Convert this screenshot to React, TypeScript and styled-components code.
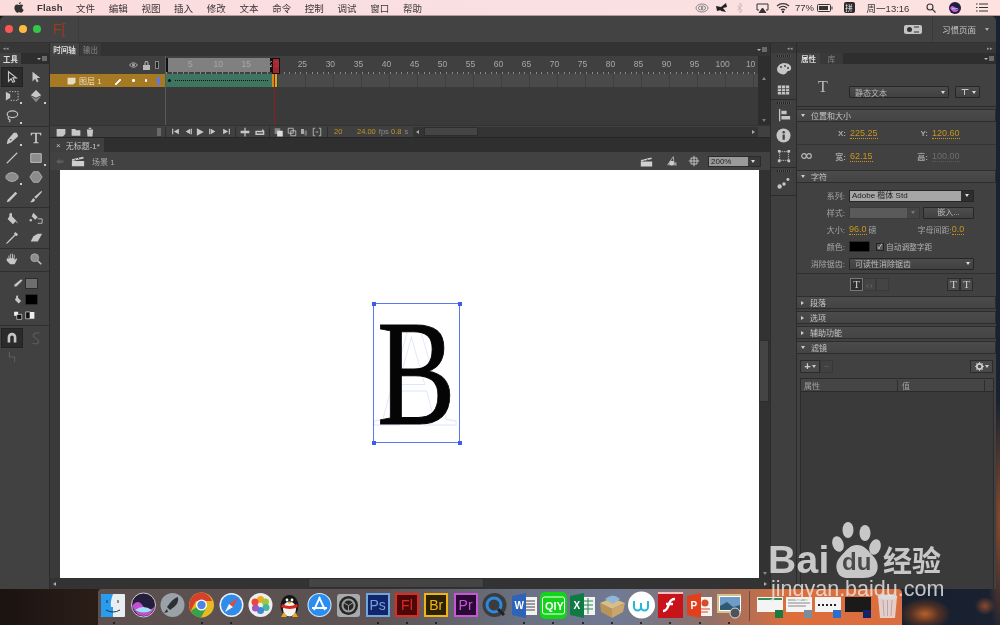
import React from "react";
import styled, { createGlobalStyle } from "styled-components";

const Global = createGlobalStyle`
  html, body { margin: 0; padding: 0; width: 1000px; height: 625px; overflow: hidden; background: #1a1210; }
  * { box-sizing: border-box; }
  #root { width: 1000px; height: 625px; }
`;

const FONT = `"Liberation Sans", "Noto Sans CJK SC", sans-serif`;
const ORANGE = "#c8961e";

const Screen = styled.div`
  position: relative; width: 1000px; height: 625px; overflow: hidden; display: flex; flex-direction: column;
  font-family: ${FONT}; filter: blur(0.35px);
  background:
    radial-gradient(ellipse 26px 16px at 925px 614px, #b5602c 0%, rgba(120,60,30,.6) 55%, transparent 100%),
    radial-gradient(ellipse 10px 9px at 985px 606px, #8a4a2a 0%, transparent 100%),
    radial-gradient(ellipse 14px 120px at 1000px 520px, #8a4a2a 0%, transparent 100%),
    linear-gradient(90deg, #1b1311 0%, #2a1d18 9%, #18202e 92%, #1a2232 100%);
`;

/* ---------- mac menu bar ---------- */
const MenuBar = styled.div`
  height: 16px; flex: none; display: flex; align-items: center; padding-left: 14px;
  background: linear-gradient(90deg, #fbdcdc 0%, #f9dfe3 45%, #fce3df 100%);
  border-bottom: 1px solid #b99b9b; color: #3a3436; font-size: 9.5px;
`;
const AppleSlot = styled.span` width: 23px; display: flex; `;
const AppName = styled.span` font-weight: 700; width: 39px; font-size: 9.5px; letter-spacing: .2px; `;
const MenuItem = styled.span` width: 32.7px; white-space: nowrap; `;
const StatusArea = styled.div` margin-left: auto; display: flex; align-items: center; height: 100%; padding-right: 7px; `;
const StatusCell = styled.span<{ $w: number }>`
  width: ${p => p.$w}px; display: flex; justify-content: center; align-items: center; white-space: nowrap; font-size: 9.5px;
`;
const PinBadge = styled.span`
  width: 11px; height: 11px; border-radius: 2px; background: #2e2a2c; color: #eee; font-size: 7.5px; display: flex; align-items: center; justify-content: center;
`;

/* ---------- app window ---------- */
const AppWindow = styled.div`
  width: 996px; height: 573px; flex: none; display: flex; flex-direction: column; background: #2b2b2b;
  border-radius: 5px 5px 0 0; overflow: hidden;
`;
const TitleBar = styled.div`
  height: 27px; flex: none; background: #434343; display: flex; align-items: center; padding-left: 5px; border-bottom: 1px solid #333;
`;
const Light = styled.span<{ $c: string }>`
  width: 8px; height: 8px; border-radius: 50%; background: ${p => p.$c}; margin-right: 6px;
`;
const FlLogo = styled.span`
  color: #9c3a22; font-size: 14px; margin-left: 6px; width: 26px; letter-spacing: 0; font-weight: 400;
  align-self: stretch; display: flex; align-items: center; border-right: 1px solid #3d3d3d;
`;
const TitleRight = styled.div` margin-left: auto; display: flex; align-items: center; height: 100%; `;
const GearChip = styled.span`
  width: 18px; height: 9px; border-radius: 2px; background: #c4c4c4; display: flex; align-items: center; justify-content: center; margin-right: 10px;
`;
const Workspace = styled.span`
  height: 100%; width: 64px; border-left: 1px solid #3a3a3a; padding-left: 9px; color: #c4c4c4; font-size: 8.5px;
  display: flex; align-items: center; gap: 9px;
`;
const Columns = styled.div` flex: 1; min-height: 0; display: flex; `;

/* ---------- tools ---------- */
const ToolsPanel = styled.div`
  width: 50px; flex: none; background: #414141; display: flex; flex-direction: column; border-right: 1px solid #2c2c2c;
`;
const CollapseBar = styled.div<{ $end?: boolean }>`
  height: 10px; flex: none; background: #373737; color: #999; font-size: 5px; display: flex; align-items: center;
  justify-content: ${p => (p.$end ? "flex-end" : "flex-start")}; padding: 0 3px;
`;
const ToolTabRow = styled.div`
  height: 11px; flex: none; background: #2e2e2e; display: flex; align-items: stretch; justify-content: space-between; padding-right: 2px;
`;
const ActiveTab = styled.span<{ $w: number }>`
  width: ${p => p.$w}px; background: #414141; color: #ddd; font-size: 7.5px; display: flex; align-items: center; justify-content: center; font-weight: 700;
`;
const PanelMenu = styled.span`
  display: flex; align-items: center; gap: 1px; color: #aaa;
  &::before { content: ""; border: 2px solid transparent; border-top-color: #bbb; margin-top: 2px; }
  &::after { content: ""; width: 5px; height: 5px; background: #6a6a6a; }
`;
const ToolGroup = styled.div<{ $t: number; $b?: number }>`
  display: grid; grid-template-columns: 24px 24px; padding: ${p => p.$t}px 0 ${p => p.$b ?? 0}px 0; grid-auto-rows: 19.5px; border-bottom: 1px solid #2f2f2f;
  &:last-child { border-bottom: none; }
`;
const ToolCell = styled.div<{ $on?: boolean; $more?: boolean }>`
  position: relative; display: flex; align-items: center; justify-content: center; margin: 0 1px;
  ${p => p.$on && "background:#2b2b2b; border:1px solid #222;"}
  ${p => p.$more && `&::after { content:""; position:absolute; right:1px; bottom:2px; width:2px; height:2px; background:#ccc; }`}
`;
const SwatchRow = styled.div` display: flex; align-items: center; height: 16px; padding-left: 13px; gap: 2px; `;
const Swatch = styled.span<{ $c: string }>` width: 13px; height: 11px; background: ${p => p.$c}; border: 1px solid #2c2c2c; `;
const ColorGroup = styled.div` padding: 3px 0 2px; border-bottom: 1px solid #2f2f2f; `;

/* ---------- centre ---------- */
const Centre = styled.div` flex: 1; min-width: 0; display: flex; flex-direction: column; `;
const TimelinePanel = styled.div` height: 94px; flex: none; display: flex; flex-direction: column; background: #3a3a3a; `;
const TabStrip = styled.div`
  height: 13px; flex: none; background: #333; display: flex; align-items: stretch; justify-content: space-between; padding-right: 3px;
`;
const TabGroup = styled.div` display: flex; `;
const PanelTab = styled.span<{ $on?: boolean; $w: number }>`
  width: ${p => p.$w}px; font-size: 7.5px; display: flex; align-items: center; justify-content: center; margin-right: 1px;
  background: ${p => (p.$on ? "#434343" : "#393939")}; color: ${p => (p.$on ? "#d8d8d8" : "#888")}; font-weight: ${p => (p.$on ? 700 : 400)};
`;
const TimelineBody = styled.div` flex: 1; min-height: 0; display: flex; position: relative; `;
const LayerColumn = styled.div` width: 116px; flex: none; display: flex; flex-direction: column; border-right: 1px solid #5a5a5a; `;
const FrameColumn = styled.div` width: 592px; flex: none; display: flex; flex-direction: column; position: relative; overflow: hidden; `;
const VScroll = styled.div`
  flex: 1; background: #2e2e2e; display: flex; flex-direction: column; justify-content: space-between; align-items: center; padding: 21px 0 3px; color: #777; font-size: 5px;
`;
const LayerHead = styled.div`
  height: 18px; flex: none; background: #404040; display: flex; align-items: center; justify-content: flex-end; gap: 5px; padding-right: 6px;
`;
const LayerRow = styled.div`
  height: 13px; flex: none; background: #a67a22; display: flex; align-items: center; padding-left: 17px; color: #e6dcc0; font-size: 8px;
`;
const LayerName = styled.span` margin-left: 3px; width: 35px; `;
const LayerDot = styled.span` width: 2.5px; height: 2.5px; border-radius: 50%; background: #fff; margin-left: 10px; `;
const LayerTag = styled.span` width: 3px; height: 8px; background: #5a78e8; margin-left: 10px; `;
const LayerEmpty = styled.div` flex: 1; background: #3a3a3a; `;
const Ruler = styled.div`
  height: 18px; flex: none; position: relative; display: flex; padding: 2px 0 0 10.3px; color: #a8a8a8; font-size: 8.5px; background: #404040;
  &::after {
    content: ""; position: absolute; left: 0; right: 0; bottom: 0; height: 2px; z-index: 2;
    background: repeating-linear-gradient(90deg, #8a8a8a 0 1px, transparent 1px 5.6px);
  }
`;
const RulerNum = styled.span` flex: 0 0 28.03px; text-align: center; line-height: 12px; position: relative; z-index: 2; `;
const PlayRange = styled.div`
  position: absolute; left: 0; top: 2px; width: 106px; height: 14px; background: #808080;
  border-left: 2px solid #111; border-right: 2px solid #111; z-index: 1;
`;
const FrameRow = styled.div`
  height: 13px; flex: none; display: flex; background: repeating-linear-gradient(90deg, #4a4a4a 0 27px, #3f3f3f 27px 28px);
`;
const Tween = styled.div`
  width: 106px; flex: none; background: #3d7560; position: relative; display: flex; align-items: center; padding: 0 3px 0 2px;
  &::after { content: ""; flex: 1; margin-left: 4px; height: 1px; background: repeating-linear-gradient(90deg, #111 0 1px, transparent 1px 2px); }
`;
const KeyDot = styled.span` width: 3px; height: 3px; background: #111; border-radius: 50%; `;
const EndKey = styled.div` width: 5px; flex: none; background: linear-gradient(90deg, #d58a1c 0 2px, #8a2a1c 2px 3px, #c9b11e 3px); `;
const FrameEmpty = styled.div` flex: 1; background: #3a3a3a; `;
const PlayHead = styled.div`
  position: absolute; left: 108px; top: 2px; bottom: 0; width: 1px; background: #8e1f1a; z-index: 3;
  &::before { content: ""; position: absolute; left: -2.5px; top: 0; width: 6px; height: 14px; background: rgba(190,30,40,.75); border: 1px solid #111; border-top-color: #111; }
`;
const TimelineFoot = styled.div`
  height: 12px; flex: none; background: #404040; display: flex; align-items: center; color: #999; font-size: 8px; border-top: 1px solid #333; padding-left: 4px;
`;
const FootSlot = styled.span<{ $w: number }>` width: ${p => p.$w}px; flex: none; display: flex; justify-content: center; align-items: center; `;
const FootGrip = styled.span` width: 4px; height: 8px; background: #6a6a6a; `;
const FootValue = styled.span<{ $w: number }>` width: ${p => p.$w}px; flex: none; color: ${ORANGE}; font-size: 7.5px; white-space: nowrap; `;
const FootDim = styled.span` color: #8a8a8a; margin-left: 1px; `;
const Divider = styled.span<{ $m: number }>` width: 1px; height: 10px; background: #2e2e2e; margin: 0 ${p => p.$m}px; flex: none; `;
const HTrack = styled.div`
  flex: 1; height: 10px; background: #343434; display: flex; align-items: center; padding: 0 3px; color: #999; font-size: 5px; gap: 5px; margin-right: 12px;
`;
const HThumb = styled.span<{ $w: number }>` width: ${p => p.$w}px; height: 9px; background: #454545; border: 1px solid #2d2d2d; `;
const Tri = styled.span<{ $dir: "l" | "r" | "u" | "d"; $c?: string; $auto?: boolean }>`
  width: 0; height: 0; flex: none; border: 2.5px solid transparent;
  ${p => p.$auto && "margin-left:auto;"}
  ${p => p.$dir === "l" && `border-right: 3px solid ${p.$c || "#aaa"}; border-left-width:0;`}
  ${p => p.$dir === "r" && `border-left: 3px solid ${p.$c || "#aaa"}; border-right-width:0;`}
  ${p => p.$dir === "u" && `border-bottom: 3px solid ${p.$c || "#888"}; border-top-width:0;`}
  ${p => p.$dir === "d" && `border-top: 3px solid ${p.$c || "#aaa"}; border-bottom-width:0;`}
`;
const DocTabs = styled.div` height: 15px; flex: none; background: #2f2f2f; display: flex; border-top: 1px solid #262626; `;
const DocTab = styled.div`
  width: 54px; background: #3f3f3f; color: #c4c4c4; font-size: 8px; display: flex; align-items: center; padding-left: 6px; gap: 5px; white-space: nowrap;
`;
const SceneBar = styled.div`
  height: 18px; flex: none; background: #424242; display: flex; align-items: center; padding-left: 5px; color: #aaa; font-size: 8px; padding-right: 9px;
`;
const SceneName = styled.span``;
const SceneRight = styled.div` margin-left: auto; display: flex; align-items: center; `;
const ZoomBox = styled.div`
  width: 53px; height: 11px; border: 1px solid #2b2b2b; background: #3a3a3a; display: flex; align-items: center; margin-left: 5px; padding-right: 3px;
`;
const ZoomField = styled.span` width: 39px; height: 100%; background: #9a9a9a; color: #222; font-size: 8px; padding-left: 2px; line-height: 9px; margin-right: 3px; `;
const StageRow = styled.div` flex: 1; min-height: 0; display: flex; background: #3a3a3a; padding-left: 10px; `;
const Stage = styled.div` flex: 1; position: relative; background: #fff; overflow: hidden; `;
const GhostA = styled.span`
  position: absolute; left: 313px; top: 130px; font-family: "Liberation Serif", serif; font-size: 149px; line-height: 149px; color: transparent;
  -webkit-text-stroke: 1px #dfe6fb; transform: scaleX(.78); transform-origin: left center;
`;
const GlyphB = styled.span`
  position: absolute; left: 316.5px; top: 128px; font-family: "Liberation Serif", serif; font-size: 151px; line-height: 151px; color: #050505;
  -webkit-text-stroke: 1px #050505; transform: scaleX(.78); transform-origin: left center;
`;
const SelectBox = styled.div` position: absolute; left: 313px; top: 133px; width: 87px; height: 140px; border: 1px solid #5a78f0; `;
const Handle = styled.span<{ $x: "l" | "r"; $y: "t" | "b" }>`
  position: absolute; width: 4px; height: 4px; background: #3a5cf5;
  ${p => (p.$x === "l" ? "left:-2.5px;" : "right:-2.5px;")}
  ${p => (p.$y === "t" ? "top:-2.5px;" : "bottom:-2.5px;")}
`;
const StageV = styled.div`
  width: 11px; flex: none; background: #323232; display: flex; flex-direction: column; align-items: center; justify-content: flex-end; padding-bottom: 3px; position: relative;
`;
const StageVThumb = styled.span` position: absolute; left: 0; right: 1px; top: 170px; height: 62px; background: #444; border: 1px solid #2c2c2c; `;
const StageH = styled.div`
  height: 11px; flex: none; background: #333; display: flex; align-items: center; padding: 0 3px 0 3px; position: relative;
`;
const StageHThumb = styled.span` position: absolute; left: 258px; width: 176px; top: 0; height: 10px; background: #444; border: 1px solid #2e2e2e; `;

/* ---------- icon dock strip ---------- */
const Strip = styled.div` width: 27px; flex: none; display: flex; flex-direction: column; background: #3f3f3f; border-left: 1px solid #2b2b2b; border-right: 1px solid #2b2b2b; `;
const StripGroup = styled.div<{ $h: number }>`
  height: ${p => p.$h}px; flex: none; display: flex; flex-direction: column; align-items: center; gap: 6px; padding-top: 2px; border-bottom: 1px solid #2b2b2b;
`;
const Grip = styled.span`
  width: 14px; height: 2px; flex: none; background: repeating-linear-gradient(90deg, #222 0 1px, #555 1px 2px); margin-bottom: -2px;
`;

/* ---------- properties ---------- */
const Props = styled.div` width: 199px; flex: none; display: flex; flex-direction: column; background: #414141; `;
const PropsTop = styled.div`
  height: 43px; flex: none; display: flex; align-items: center; padding: 14px 0 0 52px; position: relative; border-bottom: 1px solid #2b2b2b;
`;
const TGlyph = styled.span` position: absolute; left: 21px; top: 13px; font-family: "Liberation Serif", serif; color: #bbb; font-size: 16px; line-height: 20px; `;
const Combo = styled.div<{ $w: number }>`
  width: ${p => p.$w}px; height: 12px; background: linear-gradient(#4c4c4c, #404040); border: 1px solid #262626; border-radius: 1px; display: flex; align-items: center;
  color: #b8b8b8; font-size: 8px; padding: 0 3px 0 5px; white-space: nowrap;
`;
const ComboGap = styled.span` width: 6px; `;
const Section = styled.div`
  height: 13px; flex: none; background: linear-gradient(#4b4b4b, #444); border-top: 1px solid #2d2d2d; border-bottom: 1px solid #2d2d2d; border-right: 1px solid #2d2d2d;
  display: flex; align-items: center; padding-left: 4px; color: #c4c4c4; font-size: 8px; gap: 6px; margin-top: 2px;
`;
const PosRow = styled.div<{ $line?: boolean }>`
  height: 23px; flex: none; display: grid; grid-template-columns: 53px 52px 30px auto; align-items: center; font-size: 9px; color: #aaa; position: relative;
  ${p => p.$line && "border-bottom: 1px solid #343434;"}
`;
const PosLabel = styled.span` text-align: right; padding-right: 4px; font-weight: 700; font-size: 8px; color: #a8a8a8; `;
const NumLink = styled.span<{ $dim?: boolean }>`
  justify-self: start; color: ${p => (p.$dim ? "#6f6f6f" : ORANGE)}; font-size: 9px; border-bottom: 1px dotted ${p => (p.$dim ? "#5a5a5a" : ORANGE)}; line-height: 10px; white-space: nowrap;
`;
const ChainSlot = styled.span` position: absolute; left: 4px; top: 8px; display: flex; `;
const CharBody = styled.div` flex: none; display: flex; flex-direction: column; padding-top: 4px; `;
const FormRow = styled.div` height: 17px; display: flex; align-items: center; font-size: 8px; color: #a6a6a6; `;
const FormLabel = styled.span` width: 52px; text-align: right; padding-right: 4px; flex: none; white-space: nowrap; `;
const FontField = styled.div`
  width: 125px; height: 12px; background: #2e2e2e; border: 1px solid #262626; display: flex; align-items: center; color: #222; font-size: 8px;
`;
const FontValue = styled.span` width: 111px; height: 100%; background: #a6a6a6; padding-left: 2px; line-height: 10px; margin-right: 4px; white-space: nowrap; `;
const StyleField = styled.span`
  width: 71px; height: 12px; background: linear-gradient(90deg, #5a5a5a 0 82%, #454545 82%); border: 1px solid #3a3a3a; display: flex; align-items: center; padding-right: 4px;
`;
const EmbedBtn = styled.span`
  width: 51px; height: 12px; margin-left: 3px; background: linear-gradient(#4e4e4e, #414141); border: 1px solid #262626; border-radius: 1px; color: #bbb; font-size: 8px; text-align: center; line-height: 10px;
`;
const Spread = styled.span` margin-left: 41px; color: #a6a6a6; white-space: nowrap; `;
const InlineVal = styled.span` color: ${ORANGE}; border-bottom: 1px dotted ${ORANGE}; font-size: 9px; line-height: 10px; `;
const Unit = styled.span` margin-left: 2px; color: #aaa; `;
const ColorChip = styled.span` width: 21px; height: 11px; background: #000; border: 1px solid #2a2a2a; flex: none; `;
const CheckBox = styled.span`
  width: 8px; height: 8px; margin-left: 6px; border: 1px solid #222; background: #555; color: #ddd; font-size: 7px; line-height: 6px; text-align: center; margin-right: 2px;
`;
const ChipLabel = styled.span` color: #b4b4b4; font-size: 7.7px; white-space: nowrap; `;
const BtnRow = styled.div`
  height: 21px; flex: none; margin-top: 1px; border-top: 1px solid #2f2f2f; display: flex; align-items: center; padding-left: 53px;
`;
const StyleBtn = styled.span<{ $on?: boolean; $dim?: boolean }>`
  width: 13px; height: 13px; font-family: "Liberation Serif", serif; font-size: 11px; line-height: 11px; text-align: center; flex: none;
  background: ${p => (p.$on ? "#2f2f2f" : "#4b4b4b")}; border: 1px solid #2c2c2c; color: ${p => (p.$dim ? "#666" : "#ccc")};
  ${p => p.$dim && "background:#444; border-color:#3a3a3a;"}
  ${p => p.$on && "border-color:#777;"}
`;
const BtnGap = styled.span` width: 58px; `;
const FilterBar = styled.div` height: 24px; flex: none; display: flex; align-items: center; padding: 0 3px 0 3px; `;
const PlusBtn = styled.span`
  width: 20px; height: 13px; border: 1px solid #2b2b2b; background: #4a4a4a; display: flex; align-items: center; justify-content: center; gap: 1px; color: #ccc; font-size: 11px; font-weight: 700; line-height: 10px;
`;
const MinusBtn = styled.span`
  width: 13px; height: 13px; border: 1px solid #383838; color: #666; font-size: 9px; display: flex; align-items: center; justify-content: center;
`;
const GearBtn = styled.span`
  margin-left: auto; width: 23px; height: 13px; border: 1px solid #2b2b2b; background: #4a4a4a; display: flex; align-items: center; justify-content: center; gap: 1px; margin-right: 0;
`;
const FilterTable = styled.div` flex: 1; margin: 0 2px 0 3px; background: #3a3a3a; border: 1px solid #2b2b2b; border-bottom: none; `;
const FilterHead = styled.div`
  height: 13px; display: flex; align-items: center; color: #a0a0a0; font-size: 8px; border-bottom: 1px solid #2b2b2b; background: #454545; padding-left: 3px;
`;
const FilterCol = styled.span<{ $w: number }>` width: ${p => p.$w}px; `;
const FilterCol2 = styled(FilterCol)` border-left: 1px solid #2d2d2d; border-right: 1px solid #2d2d2d; padding-left: 4px; `;

/* ---------- mac dock ---------- */
const Dock = styled.div`
  height: 36px; flex: none; width: 804px; margin-left: 98px; display: flex; padding-left: 1.35px; border-radius: 4px 4px 0 0;
  background: linear-gradient(90deg, #5c4f4e 0%, #5d5354 35%, #6a7080 52%, #707a92 65%, #8f7068 76%, #dd6e3c 86%, #d96e40 100%);
`;
const DockCell = styled.div<{ $on?: boolean }>`
  flex: 0 0 29.3px; height: 100%; display: flex; justify-content: center; padding-top: 2px; position: relative;
  ${p => p.$on && `&::after { content:""; position:absolute; left:13.5px; bottom:1px; width:2px; height:2px; border-radius:50%; background:#111; }`}
`;
const DockSep = styled.div` flex: 0 0 11.7px; display: flex; justify-content: center; padding: 2px 0 4px; &::after { content:""; width:1px; background: rgba(60,40,40,.55); } `;
const AppTile = styled.span<{ $bg: string; $fg: string }>`
  width: 24px; height: 24px; margin-top: 2px; background: ${p => p.$bg}; border: 2px solid ${p => p.$fg}; color: ${p => p.$fg};
  font-size: 14px; display: flex; align-items: center; justify-content: center; line-height: 1;
`;

/* ---------- watermark ---------- */
const Watermark = styled.div` position: absolute; left: 0; top: 0; width: 1000px; height: 625px; pointer-events: none; color: rgba(235,235,235,.8); `;
const WmBai = styled.span` position: absolute; left: 768px; top: 541px; font-size: 39px; line-height: 38px; font-weight: 700; letter-spacing: .3px; `;
const WmCn = styled.span` position: absolute; left: 883px; top: 543px; font-size: 29px; line-height: 32px; font-weight: 700; font-family: "Noto Sans CJK SC", sans-serif; `;
const WmUrl = styled.span` position: absolute; left: 771px; top: 577px; font-size: 21.5px; line-height: 24px; `;
const WmDu = styled.span` position: absolute; left: 842px; top: 550px; font-size: 24px; line-height: 24px; font-weight: 700; color: #4a4a4a; `;
const WmPaw = styled.svg` position: absolute; left: 830px; top: 518px; `;

/* ---------- drawings ---------- */
const I = ({ s = 14, c = "#c6c6c6", d, sw, children }: { s?: number; c?: string; d?: string; sw?: boolean; children?: React.ReactNode }) => (
  <svg width={s} height={s} viewBox="0 0 16 16" fill={sw ? "none" : c} stroke={sw ? c : undefined} strokeWidth={sw ? 1.3 : undefined}>
    {d && <path d={d} />}
    {children}
  </svg>
);

const tools = {
  arrowO: <I sw d="M4 2v11l3-3 2 4 2-1-2-4h4z" />,
  arrowF: <I d="M4 2v11l3-3 2 4 2-1-2-4h4z" />,
  free: <I><path d="M1 3l5 3v4l-5 3z" /><path fill="none" stroke="#c6c6c6" strokeDasharray="1.5 1.5" d="M5 3h10v10H5" /></I>,
  d3: <I><path d="M8 1l6 6-6 3-6-3z" /><path d="M2 8l6 3 6-3-6 7z" fill="#8a8a8a" /></I>,
  lasso: <I sw><ellipse cx="8.5" cy="6" rx="6" ry="3.8" /><path d="M4 9c-1 2 0 3 1 3s1 2-.5 3" /></I>,
  pen: <I d="M13 2l1 1 1 3-8 7-5 2 1-5 7-8zM6 9a1 1 0 1 0 1.6.8" />,
  text: <I><path d="M2 2h12v3h-1l-1-2H9v9.500l2 .5v1H5v-1l2-.5V3H4L3 5H2z" /></I>,
  line: <I sw d="M2 14L14 2" />,
  rect: <I><path d="M2 3h12v10H2z" fill="#8c8c8c" stroke="#c6c6c6" /></I>,
  oval: <I><ellipse cx="8" cy="8" rx="7" ry="5" fill="#8c8c8c" stroke="#b6b6b6" /></I>,
  poly: <I><path d="M5 2h6l4 6-4 6H5L1 8z" fill="#8c8c8c" stroke="#b6b6b6" /></I>,
  pencil: <I d="M12 2l2 2-9 9-3 1 1-3z" />,
  brush: <I d="M14 1l1 1-7 8-2-2zM5 9l2 2c-1 3-3 3-6 3 2-1 2-3 4-5z" />,
  bucket: <I d="M7 2l1 1v3l5 5-4 4-6-6 2-3V3zM13 11c1 1 2 3 1 3s-1-2-1-3z" />,
  ink: <I><path d="M5 2l5 5-3 3-4-4zM2 9a1.500 1.500 0 1 0 .1 0" /><path fill="none" stroke="#c6c6c6" d="M10 9h5v5h-5" /></I>,
  drop: <I d="M12 1l3 3-2 2-1-1-6 6-3 3-2 1 1-2 3-3 6-6-1-1z" />,
  eraser: <I d="M10 3h5l-5 9H2l3-6z" />,
  hand: <I d="M4 8V4h1v3h1V2h1v5h1V2h1v5h1V3h1v6l2-2 1 1-3 6H6L2 10V7h1z" />,
  zoom: <I><circle cx="6.500" cy="6.500" r="4.500" fill="#8e8e8e" stroke="#aaa" /><path d="M10 10l4 4" stroke="#bbb" strokeWidth="2" /></I>,
  swap: <I><path d="M1 2h8v8H1z" fill="#eee" stroke="#111" /><path d="M6 7h8v8H6z" fill="#111" stroke="#eee" /></I>,
  noColor: <I><path d="M1 3h7v11H1z" fill="#111" stroke="#eee" /><path d="M8 3h7v11H8z" fill="#eee" /></I>,
  magnet: <I><path d="M3 13V7a5 5 0 0 1 10 0v6h-3V7a2 2 0 0 0-4 0v6z" /></I>,
  smooth: <I c="#5e5e5e" sw d="M12 2C6 2 4 4 5 6s6 3 6 6-3 3-7 2" />,
  straight: <I c="#5e5e5e" sw d="M5 2v6h6v6" />,
};

const Tool = ({ icon, on, more }: { icon: React.ReactNode; on?: boolean; more?: boolean }) => (
  <ToolCell $on={on} $more={more}>{icon}</ToolCell>
);

const foot = {
  newLayer: <I s={10} d="M1 3h14v8l-4 4H1z" />,
  folder: <I s={10} d="M1 3h6l1 2h7v9H1z" />,
  trash: <I s={10} d="M3 4h10l-1 11H4zM6 1h4v2H6z" />,
  first: <I s={9} d="M2 3h2v10H2zM14 3v10L5 8z" />,
  prev: <I s={9} d="M11 3v10L3 8zM12 3h2v10h-2z" />,
  play: <I s={10} d="M3 2v12l11-6z" />,
  next: <I s={9} d="M5 3v10l8-5zM2 3h2v10H2z" />,
  last: <I s={9} d="M2 3v10l9-5zM12 3h2v10h-2z" />,
  center: <I s={10} d="M7 1h2v5h6v4H9v5H7v-5H1V6h6z" />,
  loop: <I s={11} d="M2 7h10V4l3 3v6H2zM4 9v2h9V9z" />,
  onion: <I s={10}><path d="M1 2h9v9H1z" fill="#888" /><path d="M5 6h9v9H5z" fill="#ddd" /></I>,
  onion2: <I s={10} sw><path d="M2 2h8v8H2zM6 6h8v8H6z" /></I>,
  edit: <I s={10}><path d="M2 2h6v10H2z" fill="#aaa" /><path d="M9 5h5v10H9z" fill="#777" /></I>,
  mark: <I s={10} sw><path d="M5 2H2v12h3M11 2h3v12h-3M6 8h4" /></I>,
};

const Clapper = ({ c = "#cfcfcf", s = 14 }: { c?: string; s?: number }) => (
  <I s={s} c={c}><path d="M1 8h14v6H1z" /><path d="M1 6l13-3 .5 2L1.500 8z" /><path d="M4 5.500l1.500 1.500M8 4.500l1.500 1.500" stroke="#424242" /></I>
);

const WifiIcon = () => (
  <svg width="14" height="11" viewBox="0 0 14 11" fill="none" stroke="#3a3436" strokeWidth="1.200"><path d="M1 4a9 9 0 0 1 12 0M3 6a6 6 0 0 1 8 0M5 8a3 3 0 0 1 4 0" /><circle cx="7" cy="9.800" r=".6" fill="#3a3436" /></svg>
);

const Dk = ({ children, on }: { children: React.ReactNode; on?: boolean }) => <DockCell $on={on}>{children}</DockCell>;
const S = ({ children }: { children: React.ReactNode }) => <svg width="29" height="29" viewBox="0 0 29 29">{children}</svg>;

const thumb = (badge: string, kind: number) => (
  <S>
    <rect x="1" y="6" width="26" height="15" fill={kind === 3 ? "#1a1a1a" : "#f4f4f4"} />
    {kind === 0 && <rect x="2" y="7" width="24" height="2" fill="#2f8f5a" />}
    {kind === 1 && <path d="M3 9h20M3 12h22M3 15h18" stroke="#888" />}
    {kind === 2 && <path d="M4 14h18" stroke="#222" strokeWidth="2" strokeDasharray="2 2" />}
    <rect x="19" y="19" width="8" height="8" fill={badge} />
  </S>
);

export default function App() {
  const menus = ["文件", "编辑", "视图", "插入", "修改", "文本", "命令", "控制", "调试", "窗口", "帮助"];
  const labels = Array.from({ length: 20 }, (_, i) => String((i + 1) * 5));
  return (
    <Screen>
      <Global />
      <MenuBar>
        <AppleSlot>
          <svg width="10" height="11" viewBox="0 0 16 18" fill="#333"><path d="M11 0c.2 2-1.500 3.800-3.300 3.700C7.500 2 9.200.2 11 0zM8 5c1 0 2-1 3.700-1 1.300 0 2.600.7 3.300 1.900-3 1.700-2.500 5.800.6 7-.8 2-2.400 4.600-4 4.600-1.200 0-1.600-.8-3.100-.8s-2 .8-3.100.8C3.300 17.500.5 13.300.5 9.400.5 6 2.700 4 4.700 4 6 4 7.200 5 8 5z" /></svg>
        </AppleSlot>
        <AppName>Flash</AppName>
        {menus.map(m => <MenuItem key={m}>{m}</MenuItem>)}
        <StatusArea>
          <StatusCell $w={24}><svg width="14" height="10" viewBox="0 0 14 10" fill="none" stroke="#888"><ellipse cx="7" cy="5" rx="6" ry="4" /><circle cx="5.500" cy="5" r="2" /><circle cx="8.500" cy="5" r="2" /></svg></StatusCell>
          <StatusCell $w={14}><svg width="12" height="11" viewBox="0 0 12 11" fill="#222"><path d="M6 5L11 1l1 4-4 1 3 4-5-1zM6 5L1 4l1 5 4-1z" /></svg></StatusCell>
          <StatusCell $w={24}><svg width="6" height="10" viewBox="0 0 6 10" fill="none" stroke="#cbb9bb"><path d="M0 2.500l5 5L3 10V0l2 2.500-5 5" /></svg></StatusCell>
          <StatusCell $w={20}><svg width="13" height="10" viewBox="0 0 13 10" fill="none" stroke="#333"><path d="M3 7H1V1h11v6h-2" /><path d="M6.500 5L10 10H3z" fill="#333" /></svg></StatusCell>
          <StatusCell $w={22}><WifiIcon /></StatusCell>
          <StatusCell $w={21}>77%</StatusCell>
          <StatusCell $w={20}><svg width="16" height="8" viewBox="0 0 16 8"><rect x=".5" y=".5" width="13" height="7" rx="1" fill="none" stroke="#333" /><rect x="2" y="2" width="9" height="4" fill="#333" /><rect x="14.500" y="2.500" width="1" height="3" fill="#333" /></svg></StatusCell>
          <StatusCell $w={28}><PinBadge>拼</PinBadge></StatusCell>
          <StatusCell $w={50}>周一13:16</StatusCell>
          <StatusCell $w={36}><svg width="10" height="10" viewBox="0 0 10 10" fill="none" stroke="#333" strokeWidth="1.100"><circle cx="4" cy="4" r="3" /><path d="M6.200 6.200L9.500 9.500" /></svg></StatusCell>
          <StatusCell $w={12}><svg width="12" height="12" viewBox="0 0 12 12"><circle cx="6" cy="6" r="6" fill="#221c3e" /><path d="M1 6q2.500-4 5 0t5 0q-2 4-5 4T1 6z" fill="#cf5fd0" /><path d="M3 7q3-2 6 0" stroke="#7fd6ff" fill="none" /></svg></StatusCell>
          <StatusCell $w={10} />
          <StatusCell $w={22}><svg width="12" height="9" viewBox="0 0 12 9" stroke="#333"><path d="M3 1h9M3 4.500h9M3 8h9" /><path d="M0 1h1.500M0 4.500h1.500M0 8h1.500" /></svg></StatusCell>
        </StatusArea>
      </MenuBar>

      <AppWindow>
        <TitleBar>
          <Light $c="#fc5753" /><Light $c="#fdbc40" /><Light $c="#33c748" />
          <FlLogo>F[</FlLogo>
          <TitleRight>
            <GearChip><svg width="14" height="7" viewBox="0 0 14 7" fill="#333"><circle cx="3.500" cy="3.500" r="2.500" /><path d="M8 1h5M8 6h5" stroke="#333" /></svg></GearChip>
            <Workspace>习惯页面<Tri $dir="d" /></Workspace>
          </TitleRight>
        </TitleBar>
        <Columns>
          <ToolsPanel>
            <CollapseBar>◂◂</CollapseBar>
            <ToolTabRow><ActiveTab $w={21}>工具</ActiveTab><PanelMenu /></ToolTabRow>
            <ToolGroup $t={3}>
              <Tool icon={tools.arrowO} on /><Tool icon={tools.arrowF} />
              <Tool icon={tools.free} more /><Tool icon={tools.d3} more />
              <Tool icon={tools.lasso} more />
            </ToolGroup>
            <ToolGroup $t={2}>
              <Tool icon={tools.pen} more /><Tool icon={tools.text} />
              <Tool icon={tools.line} /><Tool icon={tools.rect} more />
              <Tool icon={tools.oval} more /><Tool icon={tools.poly} />
              <Tool icon={tools.pencil} /><Tool icon={tools.brush} />
            </ToolGroup>
            <ToolGroup $t={1}>
              <Tool icon={tools.bucket} /><Tool icon={tools.ink} />
              <Tool icon={tools.drop} /><Tool icon={tools.eraser} />
            </ToolGroup>
            <ToolGroup $t={1} $b={2}>
              <Tool icon={tools.hand} /><Tool icon={tools.zoom} />
            </ToolGroup>
            <ColorGroup>
              <SwatchRow><I s={10} d="M13 2l2 2-9 9-4 1 1-4z" /><Swatch $c="#6e6e6e" /></SwatchRow>
              <SwatchRow><I s={10} d="M7 2l1 1v3l5 5-4 4-6-6 2-3V3z" /><Swatch $c="#000" /></SwatchRow>
              <SwatchRow><I s={10}>{tools.swap.props.children}</I><I s={10}>{tools.noColor.props.children}</I></SwatchRow>
            </ColorGroup>
            <ToolGroup $t={2}>
              <Tool icon={tools.magnet} on /><Tool icon={tools.smooth} />
              <Tool icon={tools.straight} />
            </ToolGroup>
          </ToolsPanel>

          <Centre>
            <TimelinePanel>
              <TabStrip>
                <TabGroup><PanelTab $on $w={29}>时间轴</PanelTab><PanelTab $w={21}>输出</PanelTab></TabGroup>
                <PanelMenu />
              </TabStrip>
              <TimelineBody>
                <LayerColumn>
                  <LayerHead>
                    <svg width="9" height="6" viewBox="0 0 9 6" fill="none" stroke="#aaa"><path d="M.5 3Q4.500-1.500 8.500 3 4.500 7.500.5 3z" /><circle cx="4.500" cy="3" r="1" fill="#aaa" /></svg>
                    <svg width="7" height="9" viewBox="0 0 7 9" fill="#b8b8b8"><path d="M0 4h7v5H0zM1.500 4V2a2 2 0 0 1 4 0v2h-1V2a1 1 0 0 0-2 0v2z" /></svg>
                    <svg width="4" height="8" viewBox="0 0 4 8"><rect x=".5" y=".5" width="3" height="7" fill="#222" stroke="#888" /></svg>
                  </LayerHead>
                  <LayerRow>
                    <I s={9} c="#e8dcc0" d="M1 3h14v8l-4 4H1z" />
                    <LayerName>图层 1</LayerName>
                    <svg width="8" height="8" viewBox="0 0 8 8" stroke="#eee"><path d="M1 7l5-5 1 1-5 5z" fill="#eee" /></svg>
                    <LayerDot /><LayerDot /><LayerTag />
                  </LayerRow>
                  <LayerEmpty />
                </LayerColumn>
                <FrameColumn>
                  <Ruler>
                    <PlayRange />
                    {labels.map(l => <RulerNum key={l}>{l}</RulerNum>)}
                    <RulerNum>10</RulerNum>
                  </Ruler>
                  <FrameRow><Tween><KeyDot /></Tween><EndKey /></FrameRow>
                  <FrameEmpty />
                  <PlayHead />
                </FrameColumn>
                <VScroll><Tri $dir="u" /><Tri $dir="d" $c="#777" /></VScroll>
              </TimelineBody>
              <TimelineFoot>
                <FootSlot $w={14}>{foot.newLayer}</FootSlot>
                <FootSlot $w={16}>{foot.folder}</FootSlot>
                <FootSlot $w={12}>{foot.trash}</FootSlot>
                <FootSlot $w={59} />
                <FootSlot $w={8}><FootGrip /></FootSlot>
                <Divider $m={2} />
                <FootSlot $w={14}>{foot.first}</FootSlot>
                <FootSlot $w={12}>{foot.prev}</FootSlot>
                <FootSlot $w={12}>{foot.play}</FootSlot>
                <FootSlot $w={12}>{foot.next}</FootSlot>
                <FootSlot $w={16}>{foot.last}</FootSlot>
                <Divider $m={1} />
                <FootSlot $w={16}>{foot.center}</FootSlot>
                <FootSlot $w={12}>{foot.loop}</FootSlot>
                <Divider $m={4} />
                <FootSlot $w={10}>{foot.onion}</FootSlot>
                <FootSlot $w={16}>{foot.onion2}</FootSlot>
                <FootSlot $w={8}>{foot.edit}</FootSlot>
                <FootSlot $w={18}>{foot.mark}</FootSlot>
                <Divider $m={1} />
                <FootSlot $w={5} />
                <FootValue $w={23}>20</FootValue>
                <FootValue $w={34}>24.00<FootDim> fps</FootDim></FootValue>
                <FootValue $w={22}>0.8<FootDim> s</FootDim></FootValue>
                <HTrack><Tri $dir="l" /><HThumb $w={54} /><Tri $dir="r" $auto /></HTrack>
              </TimelineFoot>
            </TimelinePanel>

            <DocTabs>
              <DocTab><span>×</span><span>无标题-1*</span></DocTab>
            </DocTabs>
            <SceneBar>
              <I s={9} c="#5e5e5e" d="M8 3v3h7v4H8v3L2 8z" />
              <FootSlot $w={28}><Clapper /></FootSlot>
              <SceneName>场景 1</SceneName>
              <SceneRight>
                <FootSlot $w={26}><Clapper s={13} /></FootSlot>
                <FootSlot $w={26}><I s={13}><path d="M9 2L2 12h8z" fill="none" stroke="#bbb" /><circle cx="7" cy="10" r="3" fill="#ccc" /><rect x="10" y="9" width="3" height="4" fill="#999" /></I></FootSlot>
                <FootSlot $w={18}><I s={12} sw d="M8 1v14M1 8h14M4 4h8v8H4z" /></FootSlot>
                <ZoomBox><ZoomField>200%</ZoomField><Tri $dir="d" $c="#ddd" /></ZoomBox>
              </SceneRight>
            </SceneBar>
            <StageRow>
              <Stage>
                <GhostA>A</GhostA>
                <GlyphB>B</GlyphB>
                <SelectBox>
                  <Handle $x="l" $y="t" /><Handle $x="r" $y="t" /><Handle $x="l" $y="b" /><Handle $x="r" $y="b" />
                </SelectBox>
              </Stage>
              <StageV><StageVThumb /><Tri $dir="d" $c="#888" /></StageV>
            </StageRow>
            <StageH><Tri $dir="l" /><StageHThumb /><Tri $dir="r" $auto /></StageH>
          </Centre>

          <Strip>
            <CollapseBar $end>◂◂</CollapseBar>
            <StripGroup $h={47}>
              <Grip />
              <I s={16}><path d="M8 2c5 0 8 3 7 6s-3 1-4 3-3 3-6 2-4-3-4-5 3-6 7-6z" /><circle cx="5" cy="6" r="1" fill="#444" /><circle cx="9" cy="5" r="1" fill="#444" /><circle cx="12" cy="7" r="1" fill="#444" /></I>
              <I s={13}><path d="M1 3h14v11H1z" /><path d="M1 7h14M1 10.500h14M5.500 3v11M10.500 3v11" stroke="#444" /></I>
            </StripGroup>
            <StripGroup $h={68}>
              <Grip />
              <I s={14}><path d="M3 1v14" stroke="#c6c6c6" strokeWidth="1.500" /><path d="M5 3h6v4H5zM5 9h10v4H5z" /></I>
              <I s={15}><circle cx="8" cy="8" r="7.500" /><rect x="7" y="7" width="2.400" height="5.500" fill="#414141" /><circle cx="8.200" cy="4.500" r="1.300" fill="#414141" /></I>
              <I s={14}><path d="M3 3h10v10H3z" fill="none" stroke="#c6c6c6" strokeDasharray="1.500 1" /><path d="M1 1h3v3H1zM12 1h3v3h-3zM1 12h3v3H1zM12 12h3v3h-3z" /></I>
            </StripGroup>
            <StripGroup $h={28}>
              <Grip />
              <I s={14}><circle cx="3" cy="12" r="2.500" /><circle cx="8" cy="9" r="2" /><circle cx="12.500" cy="4" r="1.700" /></I>
            </StripGroup>
          </Strip>

          <Props>
            <CollapseBar $end>▸▸</CollapseBar>
            <ToolTabRow>
              <TabGroup><ActiveTab $w={23}>属性</ActiveTab><PanelTab $w={23}>库</PanelTab></TabGroup>
              <PanelMenu />
            </ToolTabRow>
            <PropsTop>
              <TGlyph>T</TGlyph>
              <Combo $w={100}>静态文本<Tri $dir="d" $c="#ddd" $auto /></Combo>
              <ComboGap />
              <Combo $w={25}><I s={8} d="M1 2h14v2H8v10H6V4H1z" /><Tri $dir="d" $c="#ddd" $auto /></Combo>
            </PropsTop>
            <Section><Tri $dir="d" $c="#ccc" />位置和大小</Section>
            <PosRow $line>
              <PosLabel>X:</PosLabel><NumLink>225.25</NumLink><PosLabel>Y:</PosLabel><NumLink>120.60</NumLink>
            </PosRow>
            <PosRow>
              <ChainSlot><svg width="11" height="6" viewBox="0 0 11 6" fill="none" stroke="#b8b8b8" strokeWidth="1.200"><circle cx="3" cy="3" r="2.300" /><circle cx="8" cy="3" r="2.300" /></svg></ChainSlot>
              <PosLabel>宽:</PosLabel><NumLink>62.15</NumLink><PosLabel>高:</PosLabel><NumLink $dim>100.00</NumLink>
            </PosRow>
            <Section><Tri $dir="d" $c="#ccc" />字符</Section>
            <CharBody>
              <FormRow><FormLabel>系列:</FormLabel><FontField><FontValue>Adobe 楷体 Std</FontValue><Tri $dir="d" $c="#ddd" /></FontField></FormRow>
              <FormRow><FormLabel>样式:</FormLabel><StyleField><Tri $dir="d" $c="#777" $auto /></StyleField><EmbedBtn>嵌入...</EmbedBtn></FormRow>
              <FormRow><FormLabel>大小:</FormLabel><InlineVal>96.0</InlineVal><Unit>磅</Unit><Spread>字母间距: </Spread><InlineVal>0.0</InlineVal></FormRow>
              <FormRow><FormLabel>颜色:</FormLabel><ColorChip /><CheckBox>✓</CheckBox><ChipLabel>自动调整字距</ChipLabel></FormRow>
              <FormRow><FormLabel>消除锯齿:</FormLabel><Combo $w={125}>可读性消除锯齿<Tri $dir="d" $c="#ddd" $auto /></Combo></FormRow>
            </CharBody>
            <BtnRow>
              <StyleBtn $on>T</StyleBtn><StyleBtn $dim>‹›</StyleBtn><StyleBtn $dim />
              <BtnGap />
              <StyleBtn>T</StyleBtn><StyleBtn>T</StyleBtn>
            </BtnRow>
            <Section><Tri $dir="r" $c="#ccc" />段落</Section>
            <Section><Tri $dir="r" $c="#ccc" />选项</Section>
            <Section><Tri $dir="r" $c="#ccc" />辅助功能</Section>
            <Section><Tri $dir="d" $c="#ccc" />滤镜</Section>
            <FilterBar>
              <PlusBtn>+<Tri $dir="d" $c="#ccc" /></PlusBtn><MinusBtn>−</MinusBtn>
              <GearBtn>
                <svg width="9" height="9" viewBox="0 0 10 10"><circle cx="5" cy="5" r="3" fill="none" stroke="#ccc" strokeWidth="2" /><path d="M5 0v2M5 8v2M0 5h2M8 5h2M1.500 1.500l1.500 1.500M7 7l1.500 1.500M8.500 1.500L7 3M3 7L1.500 8.500" stroke="#ccc" /></svg>
                <Tri $dir="d" $c="#ccc" />
              </GearBtn>
            </FilterBar>
            <FilterTable>
              <FilterHead><FilterCol $w={93}>属性</FilterCol><FilterCol2 $w={88}>值</FilterCol2></FilterHead>
            </FilterTable>
          </Props>
        </Columns>
      </AppWindow>

      <Dock>
        <Dk on><S><rect x="2" y="3" width="24" height="23" rx="1" fill="#e8eef2" /><path d="M2 4a1 1 0 0 1 1-1h11q-3 8-2 13h2v10H3a1 1 0 0 1-1-1z" fill="#2a9cf0" /><path d="M8 9v3M19 9v3M7 19q7 4 14 0" stroke="#234" fill="none" /></S></Dk>
        <Dk><S><circle cx="14.500" cy="14" r="12" fill="#241d3c" stroke="#ccc" /><path d="M3 15q6-8 11 0t12 0q-3 10-11 10T3 15z" fill="#c14fd0" /><path d="M6 19q8-6 17 0-8 5-17 0z" fill="#9fe0f5" /></S></Dk>
        <Dk><S><circle cx="14.500" cy="14" r="12" fill="#9aa2a8" /><path d="M20 6q1 6-4 10l-4 3-3-3 3-4q4-5 8-6zM9 18l-3 4 4-1z" fill="#2d3135" /></S></Dk>
        <Dk on><S><circle cx="14.500" cy="14" r="12.500" fill="#e8ba22" /><path d="M14.500 1.500A12.500 12.500 0 0 0 3.700 20L9 10h16a12.500 12.500 0 0 0-10.500-8.500z" fill="#d8402c" /><path d="M3.700 20A12.500 12.500 0 0 0 14 26.500l5.500-10H9z" fill="#3aa14a" /><circle cx="14.500" cy="14" r="5.500" fill="#fff" /><circle cx="14.500" cy="14" r="4.200" fill="#4a86e8" /></S></Dk>
        <Dk on><S><circle cx="14.500" cy="14" r="12" fill="#eef3f8" /><circle cx="14.500" cy="14" r="10.500" fill="#2f8cea" /><path d="M21 7l-5 9-4-3z" fill="#e8483a" /><path d="M8 21l4-8 4 3z" fill="#f4f4f4" /></S></Dk>
        <Dk><S><circle cx="14.500" cy="14" r="12" fill="#f0eeea" /><circle cx="14.500" cy="8.500" r="3.500" fill="#f2a91e" /><circle cx="19.500" cy="11" r="3.500" fill="#9cc83c" /><circle cx="20" cy="16.500" r="3.500" fill="#43b8a0" /><circle cx="14.500" cy="19.500" r="3.500" fill="#3f88d8" /><circle cx="9.500" cy="17" r="3.500" fill="#9a58c0" /><circle cx="9" cy="11" r="3.500" fill="#e8483a" /></S></Dk>
        <Dk><S><ellipse cx="14.500" cy="15" rx="9" ry="11" fill="#161616" /><ellipse cx="14.500" cy="18" rx="6.500" ry="7.500" fill="#f4f4f4" /><path d="M7 13q7 4 15 0l1 3q-8 4-17 0z" fill="#d8261c" /><path d="M9 21l-3 5h6zM20 21l3 5h-6z" fill="#eeaa18" /><circle cx="12" cy="9" r="1.400" fill="#fff" /><circle cx="17" cy="9" r="1.400" fill="#fff" /><path d="M12 11h5l-2.500 2z" fill="#eeaa18" /></S></Dk>
        <Dk><S><circle cx="14.500" cy="14" r="12" fill="#d8ecfb" /><circle cx="14.500" cy="14" r="11" fill="#2a8ef0" /><path d="M15 6l-6 13M14 6l6 13M7 17h15" stroke="#fff" strokeWidth="1.800" fill="none" /></S></Dk>
        <Dk><S><rect x="3" y="3" width="23" height="23" rx="3" fill="#a7abad" /><circle cx="14.500" cy="14.500" r="9.500" fill="#262626" /><circle cx="14.500" cy="14.500" r="6" fill="none" stroke="#9b9b9b" strokeWidth="2" /><path d="M14.500 14.500l5-3M14.500 14.500l-5-3M14.500 14.500v6" stroke="#9b9b9b" /></S></Dk>
        <Dk on><AppTile $bg="#14246a" $fg="#6ea6df">Ps</AppTile></Dk>
        <Dk on><AppTile $bg="#4a0808" $fg="#e42820">Fl</AppTile></Dk>
        <Dk on><AppTile $bg="#2e2004" $fg="#f0b60f">Br</AppTile></Dk>
        <Dk><AppTile $bg="#2a0a35" $fg="#c855d8">Pr</AppTile></Dk>
        <Dk><S><circle cx="14.500" cy="14" r="12" fill="#3c3c3c" /><circle cx="14" cy="14" r="7" fill="none" stroke="#2f88e0" strokeWidth="3" /><path d="M18 18l6 6" stroke="#222" strokeWidth="3" /></S></Dk>
        <Dk on><S><rect x="13" y="6" width="14" height="18" fill="#f2f2f2" /><path d="M15 10h10M15 13h10M15 16h10M15 19h10" stroke="#444" /><path d="M2 5l14-3v25L2 24z" fill="#2d63b8" /><text x="4.500" y="18" fontSize="10" fontWeight="700" fill="#fff" fontFamily="Liberation Sans">W</text></S></Dk>
        <Dk on><S><rect x="1" y="1" width="27" height="27" rx="5" fill="#12d418" /><rect x="3.500" y="6" width="22" height="17" rx="2" fill="none" stroke="#fff" /><text x="6" y="19" fontSize="11" fontWeight="700" fill="#fff" fontFamily="Liberation Sans">QIY</text></S></Dk>
        <Dk on><S><rect x="13" y="6" width="14" height="18" fill="#f2f2f2" /><path d="M15 10h10M15 14h10M15 18h10M20 7v16" stroke="#2a8a50" /><path d="M2 5l14-3v25L2 24z" fill="#0f7a44" /><text x="5.500" y="18" fontSize="10" fontWeight="700" fill="#fff" fontFamily="Liberation Sans">X</text></S></Dk>
        <Dk on><S><path d="M2 12l12-5 13 5-13 6z" fill="#d8bd84" /><path d="M2 12l12 6v9L3 21z" fill="#b8935a" /><path d="M27 12l-13 6v9l11-6z" fill="#caa56c" /><path d="M7 8q8-7 15 0l-7 5z" fill="#8fb7d8" /></S></Dk>
        <Dk on><S><circle cx="14.500" cy="14" r="13.500" fill="#fff" /><path d="M7 10v6a3.500 3.500 0 0 0 7 0v-4m0 4a3.500 3.500 0 0 0 7 0v-6" fill="none" stroke="#25b8d8" strokeWidth="2" /></S></Dk>
        <Dk on><S><rect x="2" y="1" width="25" height="26" fill="#c8131b" /><rect x="2" y="1" width="25" height="2" fill="#f3c0c0" /><path d="M19 8c-4 0-5 2-6 5s-2 7-6 7M10 13h7" fill="none" stroke="#fff" strokeWidth="2.400" /></S></Dk>
        <Dk on><S><rect x="13" y="6" width="14" height="19" fill="#f4f4f4" /><circle cx="20" cy="12" r="3.500" fill="#d84a28" /><path d="M15 18h10M15 21h8" stroke="#d84a28" /><path d="M2 5l14-3v25L2 24z" fill="#e2401c" /><text x="5.500" y="18" fontSize="10" fontWeight="700" fill="#fff" fontFamily="Liberation Sans">P</text></S></Dk>
        <Dk on><S><rect x="2" y="3" width="24" height="19" fill="#d8c088" /><rect x="4" y="5" width="22" height="15" fill="#fff" /><rect x="5" y="6" width="20" height="13" fill="#6d9cc8" /><path d="M5 15l7-4 6 5 7-2v5H5z" fill="#2f5a74" /><circle cx="20" cy="22" r="5" fill="#4d5358" stroke="#ddd" /></S></Dk>
        <DockSep />
        <Dk>{thumb("#1a7a40", 0)}</Dk>
        <Dk>{thumb("#7a8ea0", 1)}</Dk>
        <Dk>{thumb("#2a6ed0", 2)}</Dk>
        <Dk>{thumb("#14246a", 3)}</Dk>
        <Dk><S><path d="M5 6h19l-2 21H7z" fill="rgba(235,238,240,.75)" /><ellipse cx="14.500" cy="6" rx="10" ry="2.500" fill="#d8dcde" /><path d="M10 9l1 16M14.500 9v16M19 9l-1 16" stroke="#aab" /></S></Dk>
      </Dock>

      <Watermark>
        <WmPaw width="60" height="64" viewBox="0 0 60 64" fill="currentColor">
          <ellipse cx="18" cy="12" rx="5.500" ry="8" /><ellipse cx="35" cy="15" rx="5.500" ry="8" />
          <ellipse cx="8" cy="26" rx="5.500" ry="8" transform="rotate(-20 8 26)" /><ellipse cx="45" cy="29" rx="5.500" ry="8" transform="rotate(20 45 29)" />
          <path d="M27 27c8 0 11 6 16 11s6 12 3 17-10 5-19 5-16 1-19-5-2-12 3-17 8-11 16-11z" />
        </WmPaw>
        <WmDu>du</WmDu>
        <WmBai>Bai</WmBai>
        <WmCn>经验</WmCn>
        <WmUrl>jingyan.baidu.com</WmUrl>
      </Watermark>
    </Screen>
  );
}
